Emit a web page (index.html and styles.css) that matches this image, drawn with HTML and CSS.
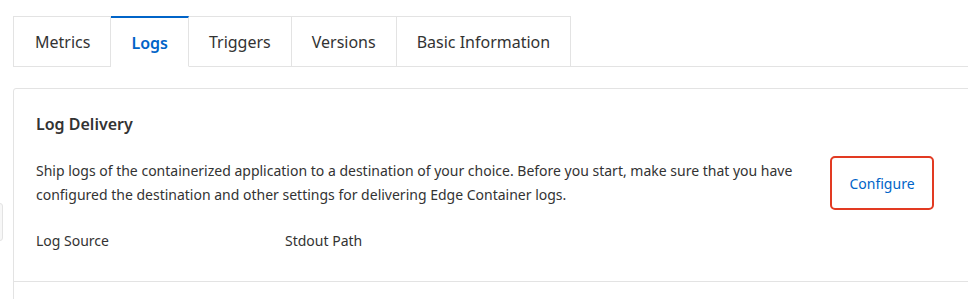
FILE: index.html
```html
<!DOCTYPE html>
<html lang="en">
<head>
    <meta charset="UTF-8">
    <meta name="viewport" content="width=device-width, initial-scale=1.0">
    <title>Logs</title>
    <link rel="stylesheet" href="styles.css">
</head>
<body>
    <div class="pagina">
        <div class="abas">
            <div class="aba">Metrics</div>
            <div class="aba ativa">Logs</div>
            <div class="aba">Triggers</div>
            <div class="aba">Versions</div>
            <div class="aba">Basic Information</div>
        </div>

        <div class="cartao">
            <div class="secao">
                <h3 class="titulo">Log Delivery</h3>
                <div class="linha">
                    <p class="descricao">Ship logs of the containerized application to a destination of your choice. Before you start, make sure that you have configured the destination and other settings for delivering Edge Container logs.</p>
                    <button class="configurar">Configure</button>
                </div>
                <div class="campos">
                    <span class="campo">Log Source</span>
                    <span class="campo">Stdout Path</span>
                </div>
            </div>
            <div class="secao vazia"></div>
        </div>
    </div>
    <div class="alca"></div>
</body>
</html>
```

FILE: styles.css
```css
*{
    margin: 0;
    padding: 0;
    box-sizing: border-box;
}
body{
    background-color: #fff;
    font-family: "Noto Sans", "Liberation Sans", Arial, sans-serif;
    color: #333;
    overflow: hidden;
    height: 299px;
    position: relative;
}
.pagina{
    padding: 16px 0 0 13px;
}
.abas{
    display: flex;
    border-bottom: 1px solid #e3e3e3;
    height: 51px;
}
.aba{
    height: 51px;
    padding: 1px 20px 0;
    display: flex;
    align-items: center;
    font-size: 16px;
    color: #333;
    border: 1px solid #e3e3e3;
    border-left: none;
    background-color: #fff;
}
.aba:first-child{
    border-left: 1px solid #e3e3e3;
    padding-left: 21px;
}
.ativa{
    border-top: 2px solid #0064c8;
    border-bottom: 1px solid #fff;
    color: #0064c8;
    font-weight: 600;
}
.cartao{
    margin-top: 21px;
    margin-right: -20px;
    border: 1px solid #e3e3e3;
    border-radius: 3px;
}
.secao{
    padding: 24px 22px 30px;
    border-bottom: 1px solid #e3e3e3;
}
.vazia{
    height: 60px;
    border-bottom: none;
}
.titulo{
    font-size: 16px;
    font-weight: 600;
    line-height: 22px;
    color: #333;
}
.linha{
    display: flex;
    align-items: center;
    margin-top: 21px;
}
.descricao{
    width: 780px;
    font-size: 14px;
    line-height: 24px;
}
.configurar{
    margin-left: 14px;
    width: 104px;
    height: 54px;
    border: 2px solid #e23a22;
    border-radius: 5px;
    background-color: #fff;
    color: #0064c8;
    font-family: inherit;
    font-size: 14px;
}
.campos{
    display: flex;
    margin-top: 21px;
    font-size: 14px;
    line-height: 20px;
}
.campo{
    width: 249px;
}
.alca{
    position: absolute;
    left: -10px;
    top: 203px;
    width: 13px;
    height: 38px;
    border: 1px solid #e3e3e3;
    border-radius: 3px;
    background-color: #f7f7f7;
}
```
